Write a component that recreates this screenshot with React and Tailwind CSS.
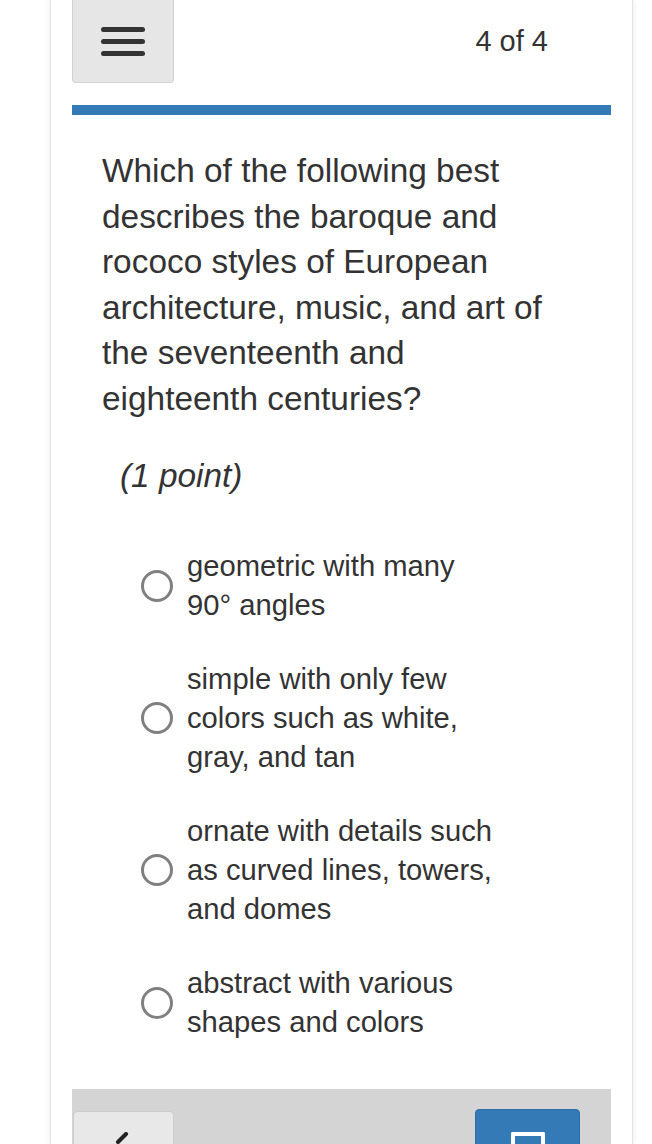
import React from 'react';

const options = [
    'geometric with many 90° angles',
    'simple with only few colors such as white, gray, and tan',
    'ornate with details such as curved lines, towers, and domes',
    'abstract with various shapes and colors',
];

export default function App() {
    return (
        <div className="min-h-screen bg-white font-['Liberation_Sans',Arial,sans-serif] text-[#333] overflow-hidden">
            <div className="ml-[50px] mr-[19px] h-[1144px] bg-white border-x border-[#e2e2e2] shadow-[0_0_6px_rgba(0,0,0,0.08)] px-[21px]">
                {/* Header */}
                <div className="flex items-center justify-between h-[83px]">
                    <button className="w-[102px] h-[83px] bg-[#e6e6e6] border border-t-0 border-[#d2d2d2] rounded-b-[4px] flex flex-col items-center justify-center gap-[7px]">
                        <span className="block w-[44px] h-[5px] rounded-full bg-[#333]"></span>
                        <span className="block w-[44px] h-[5px] rounded-full bg-[#333]"></span>
                        <span className="block w-[44px] h-[5px] rounded-full bg-[#333]"></span>
                    </button>
                    <span className="text-[29px] pr-[63px]">4 of 4</span>
                </div>

                {/* Progress */}
                <div className="mt-[22px] h-[10px] bg-[#337ab7]"></div>

                {/* Question */}
                <p className="mt-[33px] pl-[30px] w-[484px] text-[33.4px] leading-[45.5px]">
                    Which of the following best describes the baroque and rococo styles of European architecture, music, and art of the seventeenth and eighteenth centuries?
                </p>
                <p className="mt-[32px] pl-[48px] text-[33.4px] leading-[45.5px] italic">(1 point)</p>

                {/* Options */}
                <div className="mt-[48px] flex flex-col gap-[35px]">
                    {options.map((opt) => (
                        <label key={opt} className="flex items-center pl-[69px]">
                            <span className="shrink-0 w-[32px] h-[32px] rounded-full border-[3px] border-[#808080] bg-white"></span>
                            <span className="ml-[14px] w-[314px] text-[29.2px] leading-[39px]">{opt}</span>
                        </label>
                    ))}
                </div>

                {/* Footer */}
                <div className="mt-[47px] h-[80px] bg-[#d4d4d4] flex items-start justify-between pt-[22px] pr-[31px]">
                    <button className="ml-px w-[101px] h-[60px] bg-[#e8e8e8] border border-[#ccc] rounded-[4px] flex items-start justify-center pt-[20px]">
                        <svg width="20" height="20" viewBox="0 0 20 20">
                            <path d="M12 2 L4 10" stroke="#222" strokeWidth="4" strokeLinecap="round" />
                        </svg>
                    </button>
                    <button className="-mt-[2px] w-[105px] h-[60px] bg-[#337ab7] border border-[#2e6da4] rounded-[4px] flex items-start justify-center pt-[22px]">
                        <span className="block w-[34px] h-[20px] border-[4px] border-white border-b-0 rounded-t-[2px]"></span>
                    </button>
                </div>
            </div>
        </div>
    );
}
